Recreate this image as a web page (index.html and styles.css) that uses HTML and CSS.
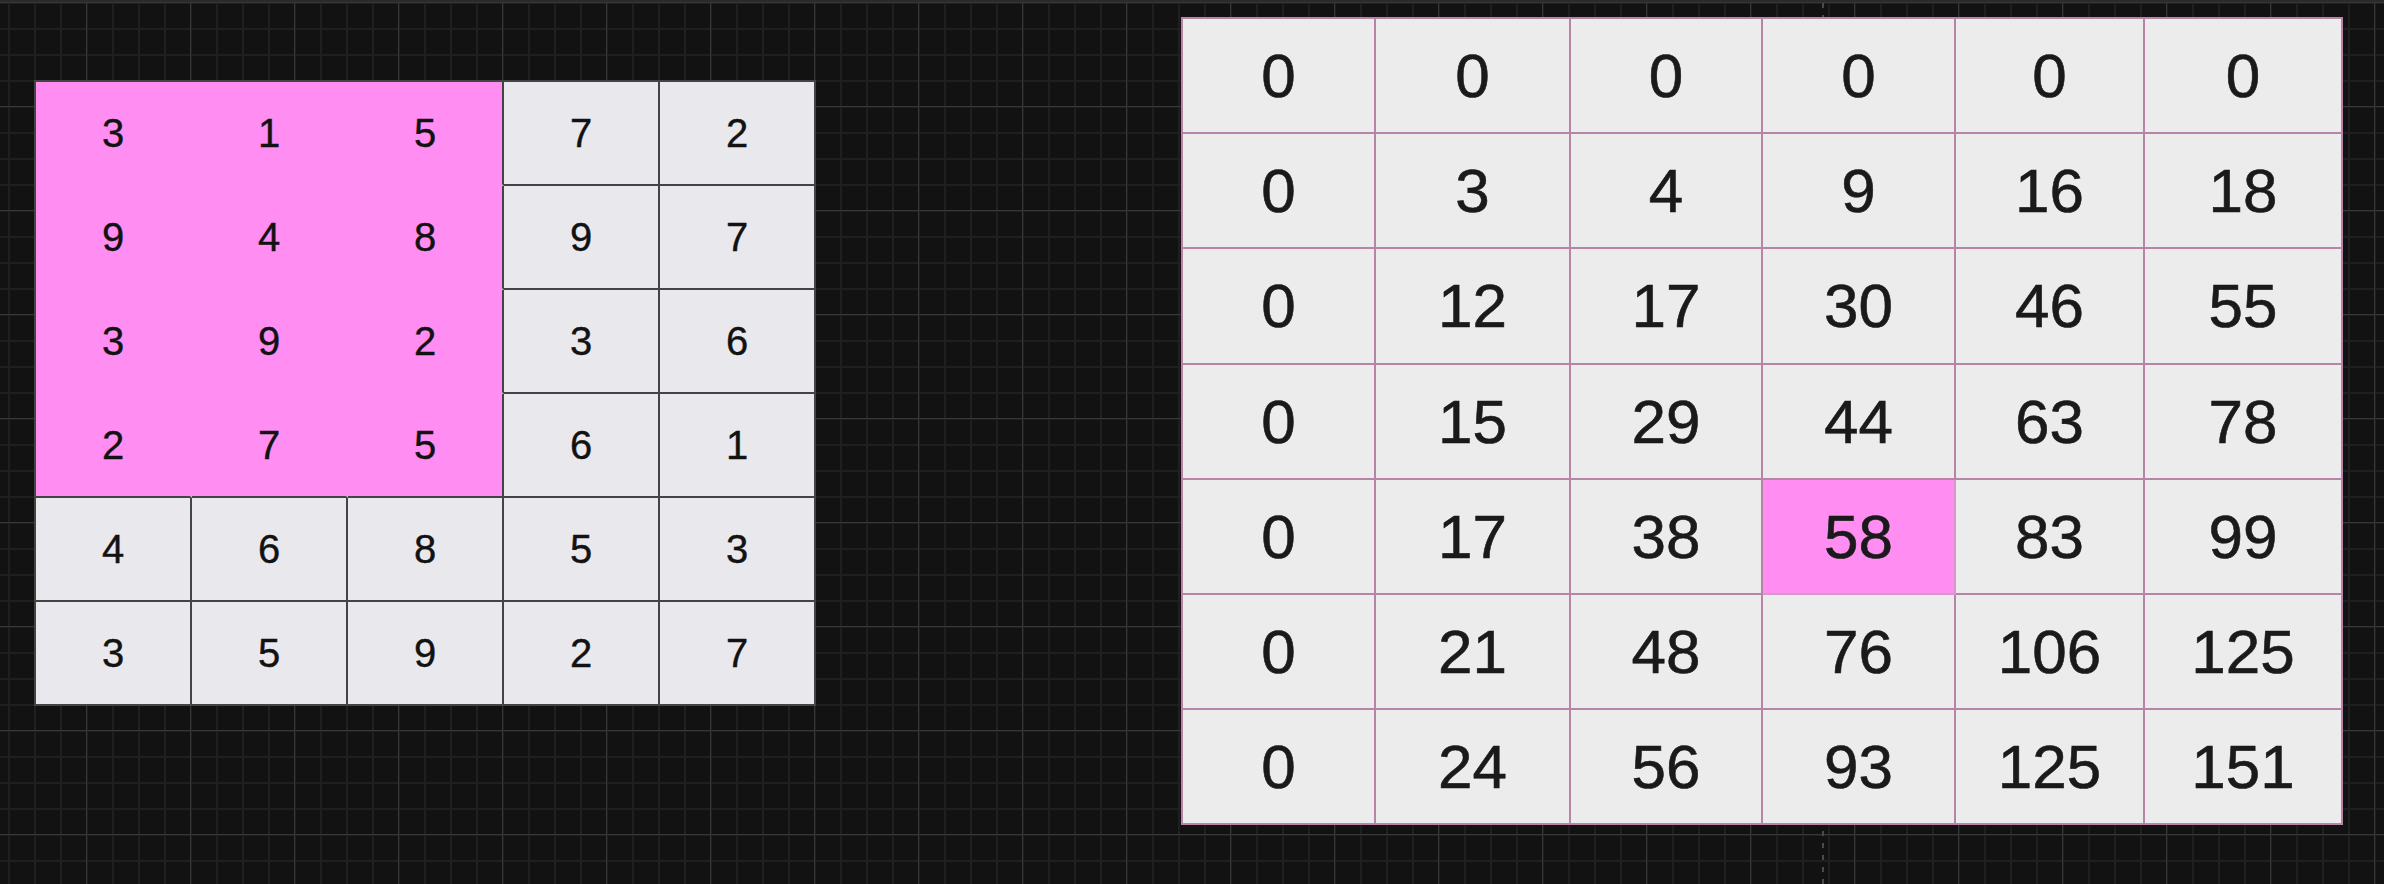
FILE: index.html
```html
<!DOCTYPE html>
<html lang="en">
<head>
<meta charset="utf-8">
<title>Prefix sum matrix</title>
<link rel="stylesheet" href="styles.css">
</head>
<body>
<div class="app">
  <div class="guide"></div>
  <div class="matrix">
    <div class="cell hl">3</div><div class="cell hl">1</div><div class="cell hl er">5</div><div class="cell">7</div><div class="cell">2</div>
    <div class="cell hl">9</div><div class="cell hl">4</div><div class="cell hl er">8</div><div class="cell">9</div><div class="cell">7</div>
    <div class="cell hl">3</div><div class="cell hl">9</div><div class="cell hl er">2</div><div class="cell">3</div><div class="cell">6</div>
    <div class="cell hl eb">2</div><div class="cell hl eb">7</div><div class="cell hl er eb">5</div><div class="cell">6</div><div class="cell">1</div>
    <div class="cell">4</div><div class="cell">6</div><div class="cell">8</div><div class="cell">5</div><div class="cell">3</div>
    <div class="cell">3</div><div class="cell">5</div><div class="cell">9</div><div class="cell">2</div><div class="cell">7</div>
  </div>
  <div class="prefix">
    <div class="pcell">0</div><div class="pcell">0</div><div class="pcell">0</div><div class="pcell">0</div><div class="pcell">0</div><div class="pcell">0</div>
    <div class="pcell">0</div><div class="pcell">3</div><div class="pcell">4</div><div class="pcell">9</div><div class="pcell">16</div><div class="pcell">18</div>
    <div class="pcell">0</div><div class="pcell">12</div><div class="pcell">17</div><div class="pcell">30</div><div class="pcell">46</div><div class="pcell">55</div>
    <div class="pcell">0</div><div class="pcell">15</div><div class="pcell">29</div><div class="pcell">44</div><div class="pcell">63</div><div class="pcell">78</div>
    <div class="pcell">0</div><div class="pcell">17</div><div class="pcell">38</div><div class="pcell hl">58</div><div class="pcell">83</div><div class="pcell">99</div>
    <div class="pcell">0</div><div class="pcell">21</div><div class="pcell">48</div><div class="pcell">76</div><div class="pcell">106</div><div class="pcell">125</div>
    <div class="pcell">0</div><div class="pcell">24</div><div class="pcell">56</div><div class="pcell">93</div><div class="pcell">125</div><div class="pcell">151</div>
  </div>
</div>
</body>
</html>
```
FILE: styles.css
```css
html, body {
  margin: 0;
  padding: 0;
}

body {
  background: #121212;
  font-family: "Liberation Sans", Arial, Helvetica, sans-serif;
  overflow: hidden;
}

.app {
  position: relative;
  width: 2384px;
  height: 884px;
  box-sizing: border-box;
  border-top: 2px solid #2b2b2b;
  background-color: #121212;
  background-image:
    linear-gradient(to right, #373737 1px, transparent 1px),
    linear-gradient(to bottom, #373737 1px, transparent 1px),
    linear-gradient(to right, #1f1f1f 2px, transparent 2px),
    linear-gradient(to bottom, #1f1f1f 2px, transparent 2px);
  background-size: 104px 104px, 104px 104px, 26px 26px, 26px 26px;
  background-position: 86px 0, 86px 0, 8px 0, 8px 0;
  display: flex;
  align-items: flex-start;
  padding-left: 34px;
}

.guide {
  position: absolute;
  left: 1822px;
  top: 0;
  width: 2px;
  height: 884px;
  background-image: linear-gradient(to bottom, #4a4a4a 5px, transparent 5px);
  background-size: 2px 12px;
  background-position: 0 1px;
}

/* Source matrix */
.matrix {
  position: relative;
  margin-top: 78px;
  display: grid;
  grid-template-columns: repeat(5, 156px);
  grid-template-rows: repeat(6, 104px);
  border-top: 2px solid #444444;
  border-left: 2px solid #444444;
}

.cell {
  box-sizing: border-box;
  display: flex;
  align-items: center;
  justify-content: center;
  background: #e9e8ed;
  border-right: 2px solid #444444;
  border-bottom: 2px solid #444444;
  color: #121212;
  font-size: 40px;
  -webkit-text-stroke: 0.4px #121212;
}

.cell.hl {
  background: #ff8df2;
  border-right-color: #ff8df2;
  border-bottom-color: #ff8df2;
}

.cell.hl.er {
  border-right-color: #444444;
}

.cell.hl.eb {
  border-bottom-color: #444444;
}

/* Prefix sum matrix */
.prefix {
  position: relative;
  margin-top: 15px;
  margin-left: 365px;
  display: grid;
  grid-template-columns: 193px 195px 192px 193px 189px 198px;
  grid-template-rows: repeat(7, 115.2px);
  border-top: 2px solid #b784a8;
  border-left: 2px solid #b784a8;
}

.pcell {
  box-sizing: border-box;
  display: flex;
  align-items: center;
  justify-content: center;
  background: #ececec;
  border-right: 2px solid #b784a8;
  border-bottom: 2px solid #b784a8;
  color: #1a1a1a;
  font-size: 62px;
  -webkit-text-stroke: 0.6px #1a1a1a;
}

.pcell.hl {
  background: #ff8df2;
  border-right-color: #d39ac8;
  border-bottom-color: #d39ac8;
}
```
